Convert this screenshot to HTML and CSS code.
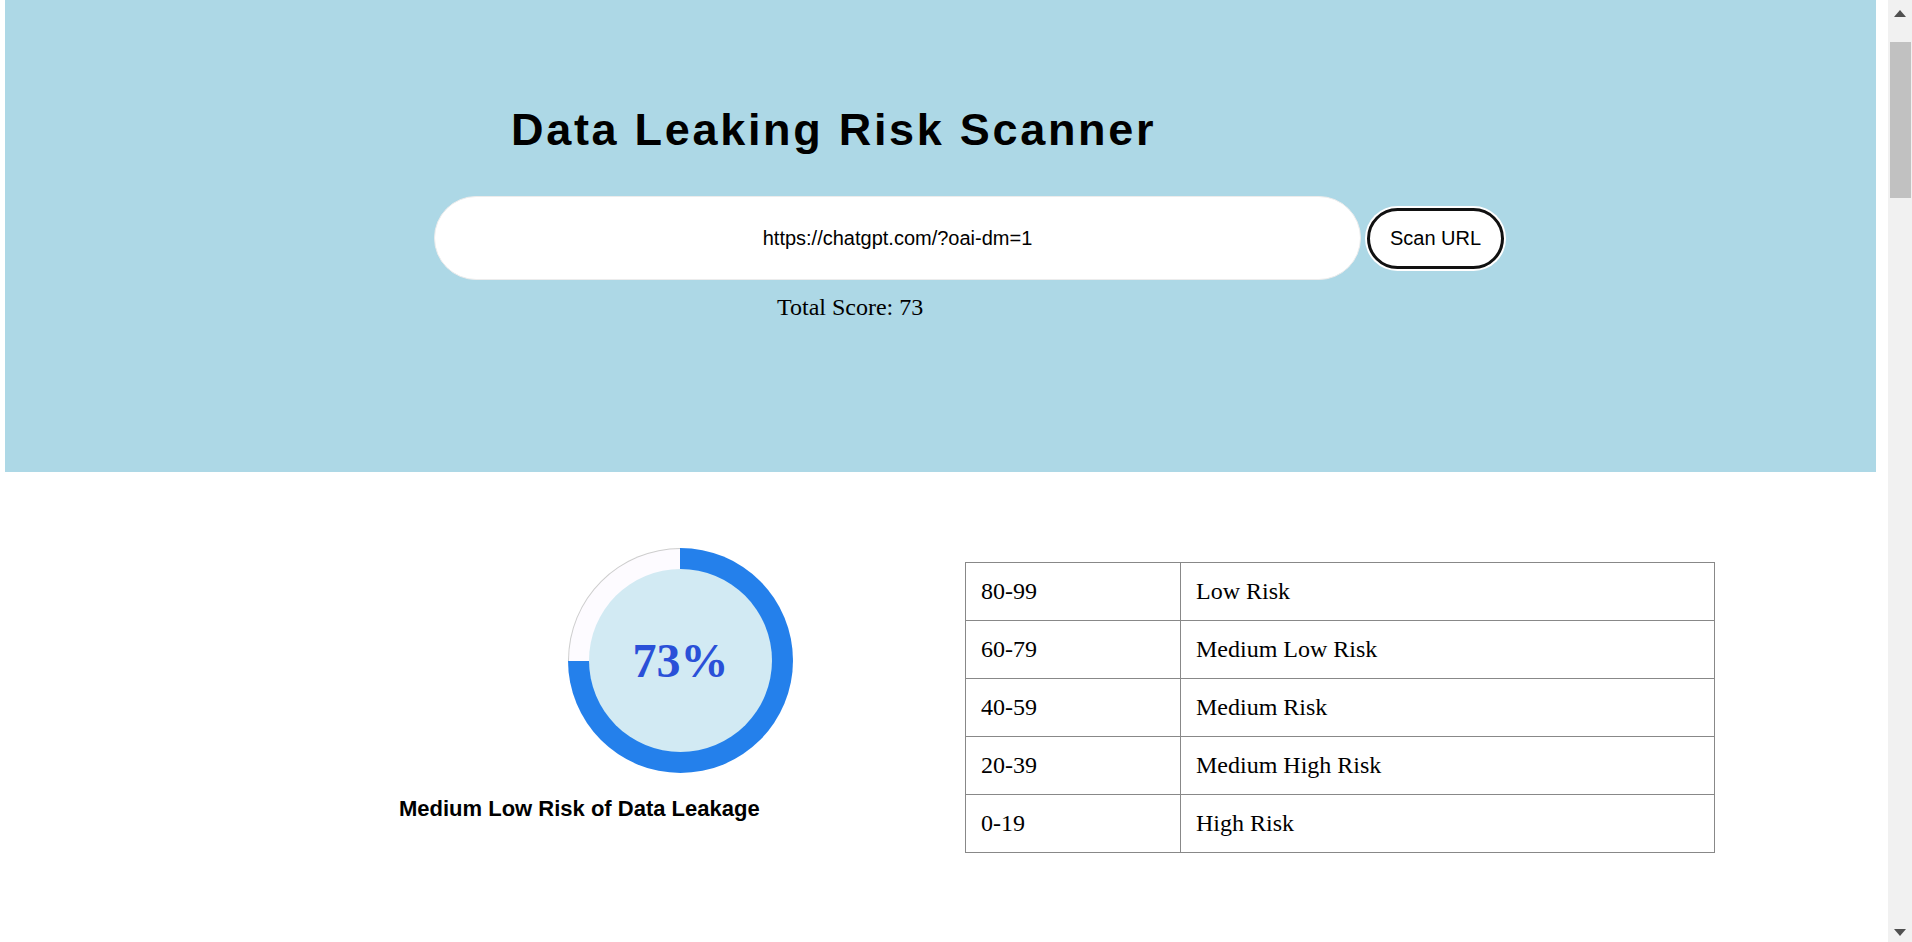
FILE: index.html
```html
<!DOCTYPE html>
<html lang="en">
<head>
<meta charset="utf-8">
<title>Data Leaking Risk Scanner</title>
<link rel="stylesheet" href="styles.css">
</head>
<body>
<header class="hero">
  <h1 class="title">Data Leaking Risk Scanner</h1>
  <form class="search-row" onsubmit="return false;">
    <input class="url-input" type="text" value="https://chatgpt.com/?oai-dm=1">
    <button class="scan-btn" type="submit">Scan URL</button>
  </form>
  <p class="score">Total Score: 73</p>
</header>
<main class="results">
  <section class="gauge-col">
    <div class="donut">
      <div class="donut-track">
        <div class="donut-inner"><span class="donut-value">73%</span></div>
      </div>
    </div>
    <p class="gauge-label">Medium Low Risk of Data Leakage</p>
  </section>
  <table class="risk-table">
    <tbody>
      <tr><td class="range">80-99</td><td>Low Risk</td></tr>
      <tr><td class="range">60-79</td><td>Medium Low Risk</td></tr>
      <tr><td class="range">40-59</td><td>Medium Risk</td></tr>
      <tr><td class="range">20-39</td><td>Medium High Risk</td></tr>
      <tr><td class="range">0-19</td><td>High Risk</td></tr>
    </tbody>
  </table>
</main>
<div class="scrollbar" aria-hidden="true">
  <span class="sb-arrow sb-up"></span>
  <span class="sb-thumb"></span>
  <span class="sb-arrow sb-down"></span>
</div>
</body>
</html>
```
FILE: styles.css
```css
html {
  background: #ffffff;
}
body {
  margin: 0;
  font-family: "Liberation Serif", "Times New Roman", serif;
  color: #000;
}
.hero {
  box-sizing: border-box;
  height: 472px;
  margin: 0 36px 0 5px;
  padding-top: 107px;
  background: #add8e6;
}
.title {
  margin: 0 0 44px 506px;
  font-family: "Liberation Sans", Arial, sans-serif;
  font-weight: 700;
  font-size: 45px;
  line-height: 45px;
  letter-spacing: 2.7px;
}
.search-row {
  display: flex;
  align-items: center;
  margin: 0 0 0 429px;
  height: 84px;
}
.url-input {
  box-sizing: border-box;
  width: 927px;
  height: 84px;
  border: 1px solid #ececec;
  border-radius: 42px;
  background: #ffffff;
  text-align: center;
  font-family: "Liberation Sans", Arial, sans-serif;
  font-size: 20px;
  color: #000;
  outline: none;
  padding: 0 20px;
}
.scan-btn {
  box-sizing: border-box;
  width: 137px;
  height: 61px;
  margin-left: 6px;
  border: 3px solid #111;
  border-radius: 31px;
  background: #ffffff;
  box-shadow: 0 0 0 2px #ffffff;
  font-family: "Liberation Sans", Arial, sans-serif;
  font-size: 20px;
  color: #000;
  padding: 0;
}
.score {
  margin: 15px 0 0 772px;
  font-size: 24px;
  line-height: 24px;
}
.results {
  display: flex;
  align-items: flex-start;
  padding-top: 76px;
}
.gauge-col {
  margin-left: 399px;
  width: 394px;
}
.donut {
  box-sizing: border-box;
  width: 225px;
  height: 225px;
  margin-left: 169px;
  padding: 1px;
  border-radius: 50%;
  background: conic-gradient(#2480eb 0 75%, #cdcdcd 0);
}
.donut-track {
  width: 100%;
  height: 100%;
  border-radius: 50%;
  display: flex;
  align-items: center;
  justify-content: center;
  background: conic-gradient(#2480eb 0 75%, #fdfbff 0);
}
.donut-inner {
  width: 183px;
  height: 183px;
  border-radius: 50%;
  background: #d2eaf3;
  display: flex;
  align-items: center;
  justify-content: center;
}
.donut-value {
  font-weight: 700;
  font-size: 48px;
  line-height: 48px;
  color: #2a50d8;
}
.gauge-label {
  margin: 25px 0 0 0;
  font-family: "Liberation Sans", Arial, sans-serif;
  font-weight: 700;
  font-size: 22px;
  line-height: 22px;
  white-space: nowrap;
}
.risk-table {
  margin: 14px 0 0 172px;
  border-collapse: collapse;
  width: 750px;
  font-size: 24px;
}
.risk-table td {
  border: 1px solid #888888;
  height: 58px;
  padding: 0 15px;
  box-sizing: border-box;
}
.risk-table td.range {
  width: 215px;
}
.scrollbar {
  position: fixed;
  top: 0;
  right: 0;
  width: 24px;
  height: 100%;
  background: #f1f1f1;
}
.sb-thumb {
  position: absolute;
  top: 42px;
  left: 2px;
  width: 21px;
  height: 156px;
  background: #c1c1c1;
}
.sb-arrow {
  position: absolute;
  left: 6px;
  width: 0;
  height: 0;
  border-left: 6px solid transparent;
  border-right: 6px solid transparent;
}
.sb-up {
  top: 10px;
  border-bottom: 7px solid #505050;
}
.sb-down {
  bottom: 6px;
  border-top: 7px solid #505050;
}
```
